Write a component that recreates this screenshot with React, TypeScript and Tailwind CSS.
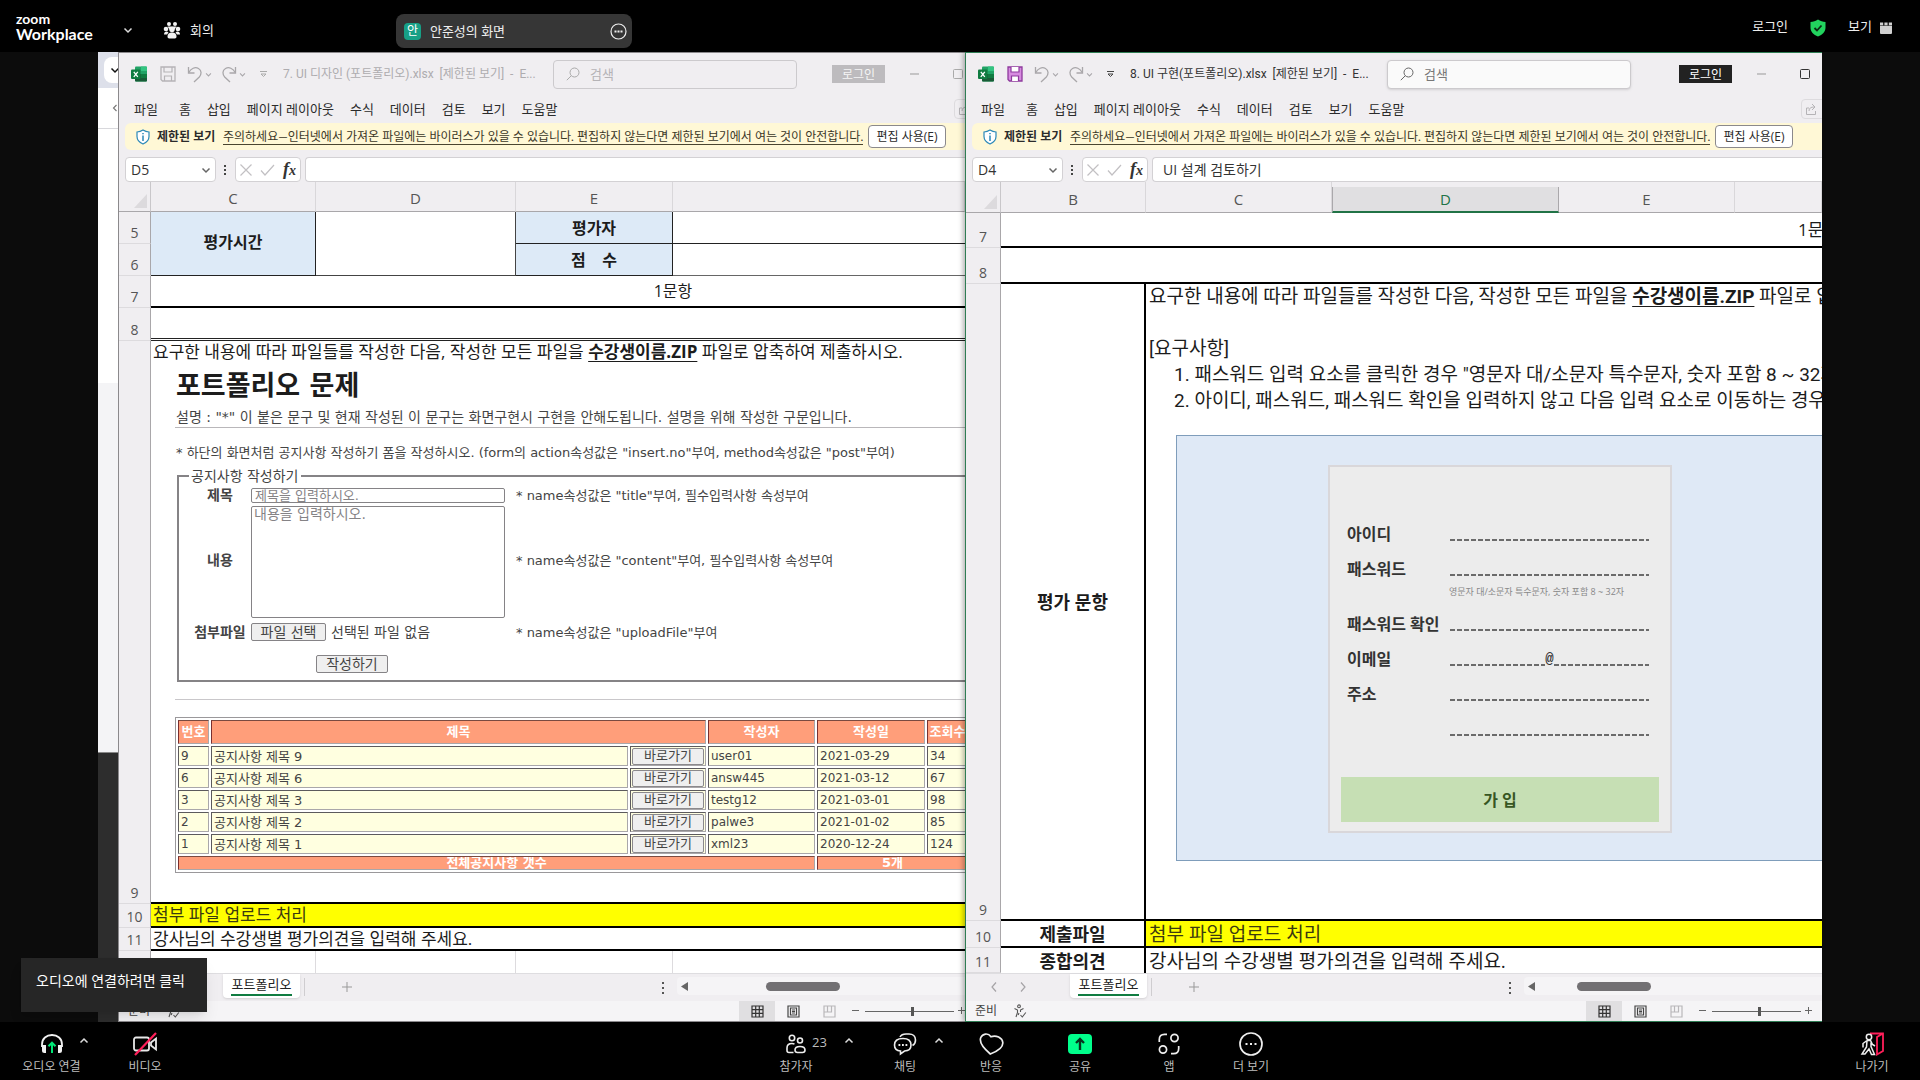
import React from "react";

type SheetWindowProps = {
  active: boolean;
  title: string;
  titleWidth: string;
  cellName: string;
  formula: string;
  thumbOffset: string;
  children: React.ReactNode;
};

const MENU = ["홈", "삽입", "페이지 레이아웃", "수식", "데이터", "검토", "보기", "도움말"];

function ExcelIcon() {
  return (
    <svg width="16" height="16" viewBox="0 0 16 16" className="shrink-0">
      <rect x="4" y="0.5" width="12" height="15" rx="1" fill="#21a366" />
      <path d="M10 .5h5a1 1 0 0 1 1 1V5h-6z" fill="#33c481" />
      <path d="M4 8h12v6.500a1 1 0 0 1-1 1H5a1 1 0 0 1-1-1z" fill="#185c37" />
      <rect x="10" y="8" width="6" height="4" fill="#107c41" />
      <rect x="0" y="3.500" width="9.500" height="9.500" rx="1" fill="#107c41" />
      <path d="M2.800 5.800l4 5M6.800 5.800l-4 5" stroke="#fff" strokeWidth="1.300" />
    </svg>
  );
}

function SaveIcon({ active }: { active: boolean }) {
  const s = active ? "#8e3a9d" : "#b5b3b6";
  const f = active ? "#d78be0" : "none";
  return (
    <svg width="16" height="16" viewBox="0 0 16 16" className="shrink-0">
      <path d="M1 1h14v14H2.500L1 13.500z" fill={f} stroke={s} strokeWidth="1.300" />
      <path d="M4 1v5h8V1" fill={active ? "#fff" : "none"} stroke={s} strokeWidth="1.200" />
      <path d="M4.500 15v-5h7v5" fill={active ? "#fff" : "none"} stroke={s} strokeWidth="1.200" />
    </svg>
  );
}

function UndoIcon({ flip }: { flip?: boolean }) {
  return (
    <svg width="16" height="18" viewBox="0 0 16 18" className={flip ? "shrink-0 -scale-x-100" : "shrink-0"} fill="none" stroke="#a9a7aa" strokeWidth="1.300">
      <path d="M1.500 2v6h6" />
      <path d="M1.800 7.500C4 3.500 8 1.500 11.500 3.500c3.500 2 3 6 .8 8.500L7 17" />
    </svg>
  );
}

function Chevron({ size, color, up }: { size: number; color: string; up?: boolean }) {
  return (
    <svg width={size} height={size} viewBox="0 0 10 10" fill="none" stroke={color} strokeWidth="1.500" className="shrink-0">
      {up ? <path d="M1.500 6.500L5 3l3.500 3.500" /> : <path d="M1.500 3.500L5 7l3.500-3.500" />}
    </svg>
  );
}

function InfoShield() {
  return (
    <svg width="14" height="16" viewBox="0 0 14 16" fill="none" className="shrink-0">
      <path d="M7 1c2 1.300 4 1.900 6 2v4.500c0 3.500-2.500 6-6 7.500-3.500-1.500-6-4-6-7.500V3c2-.1 4-.7 6-2z" stroke="#2b88b8" strokeWidth="1.200" fill="#fff" />
      <path d="M7 6.500V12M7 4v1.300" stroke="#2b88b8" strokeWidth="1.500" />
    </svg>
  );
}

function StatusBar() {
  return (
    <div className="flex h-5 shrink-0 items-center bg-[#f5f4f6] pl-[9px] text-[12px] leading-[18px] text-[#444]">
      <span className="w-[38px] shrink-0">준비</span>
      <svg width="14" height="14" viewBox="0 0 14 14" fill="none" stroke="#555" strokeWidth="1.100" className="shrink-0">
        <circle cx="6" cy="2.300" r="1.400" />
        <path d="M1.500 4.500L4.500 6v2.500L3 13M10.500 4.500L7.500 6v2M6 9l-.8 2M7.500 11l1.800 2 3.500-4.500" />
      </svg>
      <div className="w-[559px] shrink-0" />
      <button aria-label="기본" className="flex h-5 w-9 shrink-0 items-center justify-center bg-[#e0dfe1]">
        <svg width="13" height="13" viewBox="0 0 13 13" fill="none" stroke="#333" strokeWidth="1.200">
          <path d="M1 1h11v11H1zM4.700 1v11M8.300 1v11M1 4.700h11M1 8.300h11" />
        </svg>
      </button>
      <button aria-label="페이지 레이아웃" className="flex h-5 w-9 shrink-0 items-center justify-center">
        <svg width="13" height="13" viewBox="0 0 13 13" fill="none" stroke="#444" strokeWidth="1.200">
          <path d="M1 1h11v11H1zM3.500 3h6v7h-6zM5 5h3M5 6.500h3M5 8h3" />
        </svg>
      </button>
      <button aria-label="페이지 나누기 미리 보기" className="flex h-5 w-9 shrink-0 items-center justify-center">
        <svg width="13" height="13" viewBox="0 0 13 13" fill="none" stroke="#b9b7ba" strokeWidth="1.200">
          <path d="M1 1h11v11H1zM4.500 1v6M8.500 1v6H1" />
        </svg>
      </button>
      <svg width="118" height="12" viewBox="0 0 118 12" fill="none" stroke="#666" className="ml-[3px] shrink-0">
        <path d="M2 5.500h7M15 6.500h89M108 5.500h7M111.500 2v7" />
        <rect x="61" y="2" width="3" height="9" fill="#555" stroke="none" />
      </svg>
    </div>
  );
}

function SheetTabs({ thumbOffset }: { thumbOffset: string }) {
  return (
    <div className="flex h-7 shrink-0 items-start border-t border-[#dedde0] bg-[#f0eef1]">
      <div className="flex h-[26px] w-[104px] shrink-0 items-center pl-[24px]">
        <svg width="40" height="12" viewBox="0 0 40 12" fill="none" stroke="#a5a3a6" strokeWidth="1.200">
          <path d="M6 1.500L2 6l4 4.500M31 1.500L35 6l-4 4.500" />
        </svg>
      </div>
      <button className="flex h-6 w-[77px] shrink-0 justify-center rounded-b bg-white text-[13px] text-[#222] shadow-sm">
        <span className="h-[22px] border-b-2 border-[#107c41] px-px leading-5">포트폴리오</span>
      </button>
      <div className="mt-1 ml-1 h-[18px] w-px shrink-0 bg-[#cfcdd0]" />
      <svg width="12" height="12" viewBox="0 0 12 12" stroke="#999" className="mt-[7px] ml-9 shrink-0">
        <path d="M6 1v10M1 6h10" />
      </svg>
      <svg width="4" height="14" viewBox="0 0 4 14" fill="#555" className="mt-[7px] ml-[308px] shrink-0">
        <rect x="1" y="1" width="2" height="2" />
        <rect x="1" y="6" width="2" height="2" />
        <rect x="1" y="11" width="2" height="2" />
      </svg>
      <div className="mt-[3px] ml-3 flex h-[18px] min-w-0 flex-1 items-center overflow-hidden rounded-l bg-[#f5f4f6]">
        <svg width="7" height="9" viewBox="0 0 7 9" className="ml-1 shrink-0">
          <path d="M7 0v9L0 4.500z" fill="#666" />
        </svg>
        <div className={thumbOffset + " h-[9px] w-[74px] shrink-0 rounded-full bg-[#727073]"} />
      </div>
    </div>
  );
}

function SheetWindow({ active, title, titleWidth, cellName, formula, thumbOffset, children }: SheetWindowProps) {
  return (
    <section
      className={
        active
          ? "flex min-w-0 flex-[857] basis-0 flex-col overflow-hidden border-y border-l border-[#2f7d54] bg-[#f0eef1] shadow-[-2px_0_5px_rgba(0,0,0,0.3)]"
          : "flex min-w-0 flex-[847] basis-0 flex-col overflow-hidden border-y border-l border-[#8b898c] bg-[#f0eef1]"
      }
    >
      <div className="flex h-[42px] shrink-0 items-center pl-[12px]">
        <div className="flex w-[701px] shrink-0 items-center">
          <ExcelIcon />
          <div className="w-[13px] shrink-0" />
          <SaveIcon active={active} />
          <div className="w-[11px] shrink-0" />
          <UndoIcon />
          <div className="w-[2px] shrink-0" />
          <Chevron size={7} color="#a9a7aa" />
          <div className="w-[9px] shrink-0" />
          <UndoIcon flip />
          <div className="w-[2px] shrink-0" />
          <Chevron size={7} color="#a9a7aa" />
          <svg width="9" height="8" viewBox="0 0 9 8" fill="none" stroke={active ? "#444" : "#aaa"} className="ml-[13px] shrink-0">
            <path d="M1 1.500h7M2 4l2.500 2.500L7 4z" />
          </svg>
          <div className={active ? "pl-[15px] text-[#333]" : "pl-[15px] text-[#aeacaf]"}>
            <div className={titleWidth + " truncate whitespace-pre font-['Roboto','Noto_Sans_CJK_KR',sans-serif] text-[12px] leading-5"}>{title}</div>
          </div>
          <label
            className={
              active
                ? "flex h-[29px] w-[244px] shrink-0 items-center rounded border border-[#cccacd] bg-[#fafafa] pl-[12px] shadow-sm"
                : "flex h-[29px] w-[244px] shrink-0 items-center rounded border border-[#cccacd] pl-[12px]"
            }
          >
            <svg width="14" height="14" viewBox="0 0 14 14" fill="none" stroke={active ? "#666" : "#aaa"}>
              <circle cx="8.500" cy="5.500" r="4.500" />
              <path d="M5.300 8.700L.8 13.200" />
            </svg>
            <input
              aria-label="검색"
              placeholder="검색"
              className={
                active
                  ? "ml-[10px] w-40 bg-transparent text-[13px] leading-5 outline-none placeholder:text-[#777]"
                  : "ml-[10px] w-40 bg-transparent text-[13px] leading-5 outline-none placeholder:text-[#b5b3b6]"
              }
            />
          </label>
        </div>
        <button
          className={
            active
              ? "h-[18px] w-[53px] shrink-0 bg-[#222] text-[12px] leading-[17px] text-white"
              : "h-[18px] w-[53px] shrink-0 bg-[#bdbbbe] text-[12px] leading-[17px] text-[#f5f5f5]"
          }
        >
          로그인
        </button>
        <svg width="56" height="12" viewBox="0 0 56 12" fill="none" stroke={active ? "#333" : "#aaa"} className="ml-[24px] shrink-0">
          <path d="M1 6h9" stroke="#999" />
          <rect x="44.500" y="1.500" width="9" height="9" rx="1" />
        </svg>
      </div>

      <nav className="flex h-7 shrink-0 items-center pl-[15px] text-[13px] leading-5 whitespace-nowrap text-[#2b2b2b]">
        <button className="mr-[21px] shrink-0">파일</button>
        <div className="flex w-[645px] shrink-0 gap-[16px]">
          {MENU.map((m) => (
            <button key={m} className="shrink-0">
              {m}
            </button>
          ))}
        </div>
        <button aria-label="공유" className="ml-[130px] flex h-5 w-10 shrink-0 items-center rounded border border-[#dddbde] pl-1">
          <svg width="11" height="12" viewBox="0 0 11 12" fill="none" stroke="#b5b3b6">
            <path d="M3 5H.5v6.500h9V8M3 8c0-3 2-4 5-4M6 1l3 3-3 3" />
          </svg>
        </button>
      </nav>

      <div className="ml-[6px] flex h-[27px] shrink-0 items-center rounded-l-md bg-[#fff8d6] pl-[11px] text-[12px] leading-[18px] whitespace-nowrap text-[#2b2b2b]">
        <InfoShield />
        <b className="ml-[7px] w-[66px] shrink-0 font-bold">제한된 보기</b>
        <a href="#info" className="w-[635px] shrink-0 font-['Lato','Noto_Sans_CJK_KR',sans-serif] text-[#3a3626]">
          <span className="border-b border-[#4a452f]">주의하세요—인터넷에서 가져온 파일에는 바이러스가 있을 수 있습니다. 편집하지 않는다면 제한된 보기에서 여는 것이 안전합니다.</span>
        </a>
        <button className="ml-[10px] h-[23px] w-[78px] shrink-0 rounded border border-[#8b898c] bg-white text-[12px] leading-5">편집 사용(E)</button>
      </div>

      <div className="mt-[7px] ml-[6px] flex h-[25px] shrink-0 items-stretch text-[#333]">
        <div className="flex w-[91px] shrink-0 items-center justify-between rounded border border-[#d3d1d4] bg-white pr-1 pl-[5px] text-[14px] leading-5">
          {cellName}
          <Chevron size={10} color="#666" />
        </div>
        <svg width="4" height="12" viewBox="0 0 4 12" fill="#444" className="mt-[7px] ml-[7px] shrink-0">
          <rect x="1" y="1" width="2" height="2" />
          <rect x="1" y="5" width="2" height="2" />
          <rect x="1" y="9" width="2" height="2" />
        </svg>
        <div className="ml-2 flex w-[66px] shrink-0 items-center rounded border border-[#d3d1d4] bg-white pl-[3px]">
          <svg width="36" height="14" viewBox="0 0 36 14" fill="none" stroke="#c2c0c3" strokeWidth="1.200">
            <path d="M1.500 1.500l11 11M12.500 1.500l-11 11M22 7.500l4 4.500L35 2" />
          </svg>
          <i className="ml-2 font-['Liberation_Serif',serif] text-[18px] leading-5 font-bold">
            f<span className="text-[14px]">x</span>
          </i>
        </div>
        <input
          aria-label="수식 입력줄"
          defaultValue={formula}
          className="ml-1 min-w-0 flex-1 rounded-l border-y border-l border-[#d3d1d4] bg-white pl-[10px] text-[14px] leading-5 outline-none"
        />
      </div>

      {children}
      <SheetTabs thumbOffset={thumbOffset} />
      <StatusBar />
    </section>
  );
}

function Corner() {
  return (
    <div className="flex items-end justify-end border-r border-b border-[#a9a7aa] border-r-[#c9c7ca] p-[3px]">
      <svg width="13" height="14" viewBox="0 0 13 14">
        <path d="M13 0v14H0z" fill="#dcdadd" />
      </svg>
    </div>
  );
}

function ColHead({ name, selected }: { name?: string; selected?: boolean }) {
  return (
    <div
      className={
        selected
          ? "mt-[5px] flex items-center justify-center border-x border-b-2 border-x-[#aaa8ab] border-b-[#217346] bg-[#e0dfe1] text-[#217346]"
          : "flex items-center justify-center border-r border-b border-r-[#d9d7da] border-b-[#a9a7aa] pt-[3px] text-[#555]"
      }
    >
      {name}
    </div>
  );
}

function RowHead({ n }: { n: string }) {
  return <div className="flex items-end justify-center border-r border-b border-r-[#a9a7aa] border-b-[#dddbde] text-[14px] leading-5 text-[#555]">{n}</div>;
}

const POSTS = [
  ["9", "공지사항 제목 9", "user01", "2021-03-29", "34"],
  ["6", "공지사항 제목 6", "answ445", "2021-03-12", "67"],
  ["3", "공지사항 제목 3", "testg12", "2021-03-01", "98"],
  ["2", "공지사항 제목 2", "palwe3", "2021-01-02", "85"],
  ["1", "공지사항 제목 1", "xml23", "2020-12-24", "124"],
];

const TD = "border border-t-[#5c5a5d] border-l-[#5c5a5d] border-r-[#a9a7aa] border-b-[#a9a7aa] p-0 h-5 overflow-hidden";
const TH = "border border-t-[#7a4a40] border-l-[#7a2f2f] border-r-[#a9a7aa] border-b-[#a9a7aa] p-0 overflow-hidden text-center text-[13px] leading-[12px] font-bold text-white bg-[#ff9e7a]";

function PostTable() {
  return (
    <table className="w-[796px] table-fixed border-separate border-spacing-[2px] border border-[#9a989b] text-[12px] leading-[13px] text-[#444]">
      <colgroup>
        <col className="w-[31px]" />
        <col className="w-[417px]" />
        <col className="w-[76px]" />
        <col className="w-[107px]" />
        <col className="w-[108px]" />
        <col className="w-[41px]" />
      </colgroup>
      <thead>
        <tr>
          <th className={TH + " h-6"}>번호</th>
          <th className={TH} colSpan={2}>제목</th>
          <th className={TH}>작성자</th>
          <th className={TH}>작성일</th>
          <th className={TH}>조회수</th>
        </tr>
      </thead>
      <tbody>
        {POSTS.map((p) => (
          <tr key={p[0]} className="bg-[#ffffe0]">
            <td className={TD + " pl-[2px]"}>{p[0]}</td>
            <td className={TD + " pl-[2px] text-[13px]"}>{p[1]}</td>
            <td className={TD}>
              <button className="mx-auto block h-[17px] w-[72px] rounded-xs border border-[#8b898c] bg-[#efefef] text-[13px] leading-[14px]">바로가기</button>
            </td>
            <td className={TD + " pl-[2px]"}>{p[2]}</td>
            <td className={TD + " pl-[2px]"}>{p[3]}</td>
            <td className={TD + " pl-[2px]"}>{p[4]}</td>
          </tr>
        ))}
      </tbody>
      <tfoot>
        <tr>
          <th className={TH + " h-[14px]"} colSpan={4}>전체공지사항 갯수</th>
          <th className={TH} colSpan={2}>5개</th>
        </tr>
      </tfoot>
    </table>
  );
}

function PortfolioDoc() {
  return (
    <div className="w-[1044px] pl-[24px] font-['DejaVu_Sans','Noto_Sans_CJK_KR',sans-serif] text-[13px] text-[#444]">
      <h1 className="mt-[7px] pl-[1px] text-[27px] leading-[32px] font-bold text-[#1c1c1c]">포트폴리오 문제</h1>
      <p className="mt-[5px] pl-[1px] text-[14px] leading-5 whitespace-nowrap">설명 : "*" 이 붙은 문구 및 현재 작성된 이 문구는 화면구현시 구현을 안해도됩니다. 설명을 위해 작성한 구문입니다.</p>
      <hr className="border-[#b9b7ba]" />
      <p className="mt-[15px] pl-[1px] leading-5 whitespace-nowrap">* 하단의 화면처럼 공지사항 작성하기 폼을 작성하시오. (form의 action속성값은 "insert.no"부여, method속성값은 "post"부여)</p>
      <fieldset className="mt-[3px] ml-[2px] h-[216px] w-[1000px] border-2 border-[#858386] pl-[10px]">
        <legend className="px-[2px] text-[14px] leading-5">공지사항 작성하기</legend>
        <div className="mt-[2px] grid grid-cols-[62px_265px_1fr] items-center leading-[15px]">
          <label htmlFor="post-title" className="text-center text-[14px] font-bold">제목</label>
          <input id="post-title" placeholder="제목을 입력하시오." className="h-[15px] w-[254px] rounded-xs border border-[#858386] px-[3px] text-[13px] leading-[13px] outline-none placeholder:text-[#858386]" />
          <span>* name속성값은 "title"부여, 필수입력사항 속성부여</span>
          <label htmlFor="post-body" className="text-center text-[14px] font-bold">내용</label>
          <textarea id="post-body" placeholder="내용을 입력하시오." className="mt-[3px] block h-[112px] w-[254px] resize-none rounded-xs border border-[#858386] px-[2px] text-[14px] leading-[14px] outline-none placeholder:text-[#858386]" />
          <span>* name속성값은 "content"부여, 필수입력사항 속성부여</span>
          <span className="mt-[5px] text-center text-[14px] font-bold">첨부파일</span>
          <div className="mt-[5px] flex items-center gap-[5px] text-[14px]">
            <button className="h-[18px] w-[75px] rounded-xs border border-[#858386] bg-[#efefef]">파일 선택</button>
            선택된 파일 없음
          </div>
          <span className="mt-[5px]">* name속성값은 "uploadFile"부여</span>
        </div>
        <button className="mt-[14px] ml-[127px] block h-[18px] w-[72px] rounded-xs border border-[#858386] bg-[#efefef] text-[14px] leading-[15px]">작성하기</button>
      </fieldset>
      <hr className="mt-[17px] mb-[17px] border-[#c9c7ca]" />
      <PostTable />
    </div>
  );
}

function LeftSheet() {
  return (
    <div className="grid min-h-0 flex-1 grid-cols-[32px_165px_200px_157px_1fr] grid-rows-[30px_32px_32px_32px_33px_1fr_24px_23px_22px] overflow-hidden text-[17px] leading-6 whitespace-nowrap text-[#1c1c1c]">
      <Corner />
      <div className="col-span-4 grid grid-cols-subgrid text-[15px] leading-5">
        <ColHead name="C" />
        <ColHead name="D" />
        <ColHead name="E" />
        <ColHead />
      </div>

      <RowHead n="5" />
      <div className="row-span-2 flex items-center justify-center border-r border-b border-[#222] bg-[#ddeaf7] pb-1 text-[16px] font-bold">평가시간</div>
      <div className="row-span-2 border-r border-b border-[#444] bg-white" />
      <div className="flex items-center justify-center border-r border-b border-[#222] bg-[#ddeaf7] text-[16px] font-bold">평가자</div>
      <div className="border-b border-[#222] bg-white" />
      <RowHead n="6" />
      <div className="flex items-center justify-center border-r border-b border-[#222] bg-[#ddeaf7] text-[16px] font-bold whitespace-pre">점    수</div>
      <div className="border-b border-[#666] bg-white" />

      <RowHead n="7" />
      <div className="col-span-4 overflow-hidden border-b-2 border-black bg-white">
        <div className="w-[1044px] pt-[3px] text-center text-[16px]">1문항</div>
      </div>
      <RowHead n="8" />
      <div className="col-span-4 border-b-[3px] border-double border-[#222] bg-white" />
      <RowHead n="9" />
      <div className="col-span-4 overflow-hidden border-b-2 border-black bg-white">
        <p className="pl-[2px] leading-[22px]">
          요구한 내용에 따라 파일들를 작성한 다음, 작성한 모든 파일을 <b className="underline underline-offset-[3px]">수강생이름.ZIP</b> 파일로 압축하여 제출하시오.
        </p>
        <PortfolioDoc />
      </div>
      <RowHead n="10" />
      <div className="col-span-4 flex items-center border-b-2 border-black bg-[#ffff00] pl-[2px] text-[#3b3a10]">첨부 파일 업로드 처리</div>
      <RowHead n="11" />
      <div className="col-span-4 flex items-center border-b-2 border-black bg-white pl-[2px]">강사님의 수강생별 평가의견을 입력해 주세요.</div>
      <div className="border-r border-[#a9a7aa]" />
      <div className="border-r border-[#dddbde] bg-white" />
      <div className="border-r border-[#dddbde] bg-white" />
      <div className="border-r border-[#dddbde] bg-white" />
      <div className="bg-white" />
    </div>
  );
}

const DASH = "h-[14px] min-w-0 flex-1 bg-[repeating-linear-gradient(to_right,#6b6b6b_0_5px,transparent_5px_7px)] bg-[length:100%_2px] bg-bottom bg-no-repeat outline-none";

function Field({ id, label }: { id: string; label: string }) {
  return (
    <div className="flex h-[35px] items-center">
      <label htmlFor={id} className="w-[103px] shrink-0">{label}</label>
      <input id={id} className={DASH} />
    </div>
  );
}

function SignUpForm() {
  return (
    <div className="w-[344px] border-2 border-[#d9d7da] bg-[#ececec] px-[11px] pt-[49px] pb-[9px] text-[16px] leading-6 font-bold text-[#333]">
      <div className="pr-[10px] pl-[6px]">
        <Field id="uid" label="아이디" />
        <Field id="pw" label="패스워드" />
        <p className="-mt-[4px] h-[24px] pl-[102px] text-[9px] leading-5 font-normal text-[#888]">영문자 대/소문자 특수문자, 숫자 포함 8 ~ 32자</p>
        <Field id="pw2" label="패스워드 확인" />
        <div className="flex h-[35px] items-center">
          <label htmlFor="mail" className="w-[103px] shrink-0">이메일</label>
          <input id="mail" className={DASH} />
          <span className="font-['Liberation_Mono',monospace] text-[14px] leading-5">@</span>
          <input aria-label="이메일 도메인" className={DASH} />
        </div>
        <Field id="addr" label="주소" />
        <Field id="addr2" label="" />
      </div>
      <button className="mt-[31px] h-[45px] w-full bg-[#c6dfb4] text-[#375623]">가 입</button>
    </div>
  );
}

function RightSheet() {
  return (
    <div className="grid min-h-0 flex-1 grid-cols-[35px_145px_186px_227px_176px_1fr] grid-rows-[31px_35px_36px_1fr_27px_25px] overflow-hidden text-[19px] leading-[26px] whitespace-nowrap text-[#1c1c1c]">
      <Corner />
      <div className="col-span-5 grid grid-cols-subgrid text-[15px] leading-6">
        <ColHead name="B" />
        <ColHead name="C" />
        <ColHead name="D" selected />
        <ColHead name="E" />
        <ColHead />
      </div>

      <RowHead n="7" />
      <div className="col-span-5 overflow-hidden border-b-2 border-black bg-white pt-[4px] pl-[797px] text-[17px]">1문항</div>
      <RowHead n="8" />
      <div className="col-span-5 border-b-2 border-black bg-white" />
      <RowHead n="9" />
      <div className="flex items-center justify-center border-r-2 border-b-2 border-black bg-white text-[18px] font-bold">평가 문항</div>
      <div className="col-span-4 overflow-hidden border-b-2 border-black bg-white pl-[3px]">
        <div className="font-['Roboto','Noto_Sans_CJK_KR',sans-serif]">
          <p>
            요구한 내용에 따라 파일들를 작성한 다음, 작성한 모든 파일을 <b className="underline underline-offset-[3px]">수강생이름.ZIP</b> 파일로 압축하여 제출하시오.
          </p>
          <p className="mt-[26px]">[요구사항]</p>
          <ol className="pl-[25px]">
            <li>1. 패스워드 입력 요소를 클릭한 경우 "영문자 대/소문자 특수문자, 숫자 포함 8 ~ 32자"</li>
            <li>2. 아이디, 패스워드, 패스워드 확인을 입력하지 않고 다음 입력 요소로 이동하는 경우</li>
          </ol>
        </div>
        <div className="mt-[21px] ml-[27px] w-[900px] border border-[#7f9dbb] bg-[#dfe9f6] pt-[29px] pb-[27px] pl-[151px]">
          <SignUpForm />
        </div>
      </div>
      <RowHead n="10" />
      <div className="flex items-center justify-center border-r-2 border-b-2 border-black bg-white text-[18px] font-bold">제출파일</div>
      <div className="col-span-4 flex items-center border-b-2 border-black bg-[#ffff00] pl-[3px] text-[#3b3a10]">첨부 파일 업로드 처리</div>
      <RowHead n="11" />
      <div className="flex items-center justify-center border-r-2 border-black bg-white text-[18px] font-bold">종합의견</div>
      <div className="col-span-4 flex items-center bg-white pl-[3px]">강사님의 수강생별 평가의견을 입력해 주세요.</div>
    </div>
  );
}

function TopBar() {
  return (
    <header className="flex h-[52px] shrink-0 items-center bg-black pl-4 text-[13px] leading-5 text-[#eee]">
      <div className="w-[107px] pt-px font-['Lato',sans-serif] text-white">
        <div className="text-[14px] leading-[14px] font-bold">zoom</div>
        <div className="text-[16px] leading-[15px] font-bold">Workplace</div>
      </div>
      <button aria-label="메뉴" className="mt-2">
        <Chevron size={10} color="#ddd" />
      </button>
      <button className="mt-2 ml-[30px] flex items-center gap-[9px]">
        <svg width="18" height="18" viewBox="0 0 18 18" fill="#f2f2f2">
          <circle cx="6" cy="3" r="2" />
          <circle cx="12" cy="3" r="2" />
          <circle cx="3" cy="8" r="2.300" />
          <circle cx="15" cy="8" r="2.300" />
          <circle cx="9" cy="8.500" r="2.700" />
          <path d="M4.500 5.500h9l-2 3h-5zM1 13.500c0-2 1-3 3-3l1.500 1-1.500 2zM17 13.500c0-2-1-3-3-3l-1.500 1 1.500 2z" />
          <path d="M4.500 15.500c0-2.500 1.500-4 4.500-4s4.500 1.500 4.500 4c0 1.300-.6 2-1.800 2H6.300c-1.200 0-1.800-.7-1.800-2z" />
        </svg>
        회의
      </button>
      <div className="mt-[10px] ml-[182px] flex h-[34px] w-[236px] items-center rounded-[8px] bg-[#363636] pr-[5px] pl-2">
        <span className="flex h-[17px] w-[17px] items-center justify-center rounded bg-[#17a086] text-[12px] text-white">안</span>
        <span className="ml-[9px]">안준성의 화면</span>
        <button aria-label="더 보기" className="ml-auto">
          <svg width="17" height="17" viewBox="0 0 17 17" fill="none" stroke="#eee">
            <circle cx="8.500" cy="8.500" r="7.500" strokeWidth="1.200" />
            <path d="M4.500 8.500h2M7.500 8.500h2M10.500 8.500h2" strokeWidth="1.800" />
          </svg>
        </button>
      </div>
      <div className="mr-[28px] ml-auto flex items-center">
        <button>로그인</button>
        <svg width="16" height="18" viewBox="0 0 16 18" className="mt-1 ml-[22px]">
          <path d="M8 .5c2.300 1.600 4.800 2.400 7.500 2.500v5.500c0 4.300-3 7.300-7.500 9-4.500-1.700-7.500-4.700-7.500-9V3C3.200 2.900 5.700 2.100 8 .5z" fill="#22d35e" />
          <path d="M4.500 9l2.500 2.500 4.500-5" fill="none" stroke="#0b2a14" strokeWidth="1.800" />
        </svg>
        <button className="ml-[22px] flex items-center gap-2">
          보기
          <svg width="12" height="12" viewBox="0 0 12 12" fill="#d0d0d0" className="mt-[3px]">
            <path d="M0 3.800h12V11a1 1 0 0 1-1 1H1a1 1 0 0 1-1-1zM0 .5h3.200v2.800H0zM4.400.5h3.200v2.800H4.400zM8.800.5H12v2.800H8.800z" />
          </svg>
        </button>
      </div>
    </header>
  );
}

function Tool({ label, width, children }: { label: string; width: string; children: React.ReactNode }) {
  return (
    <button className={width + " flex shrink-0 flex-col items-center text-[12px] leading-[18px] text-[#bdbdbd]"}>
      <span className="flex h-6 items-center justify-center">{children}</span>
      <span className="mt-[2px] whitespace-nowrap">{label}</span>
    </button>
  );
}

function BottomBar() {
  return (
    <footer className="flex h-[58px] shrink-0 items-start bg-black pt-[10px]">
      <div className="relative flex shrink-0">
        <div className="absolute bottom-full left-[21px] mb-[20px] h-[54px] w-[186px] bg-[#262626] pt-3 pl-[15px] text-[14px] leading-[22px] whitespace-nowrap text-white shadow-lg">오디오에 연결하려면 클릭</div>
        <div className="w-3" />
        <Tool label="오디오 연결" width="w-[79px]">
          <svg width="26" height="24" viewBox="0 0 26 24" fill="none">
            <path d="M3 15v-2.500C3 6.500 7.500 3 13 3s10 3.500 10 9.500V15" stroke="#f2f2f2" strokeWidth="1.800" />
            <path d="M3 13h4v8H5.500A2.500 2.500 0 0 1 3 18.500zM23 13h-4v8h1.500a2.500 2.500 0 0 0 2.500-2.500z" fill="#f2f2f2" />
            <path d="M13 21V11M9.500 14.200L13 10.700l3.500 3.500" stroke="#00e676" strokeWidth="2" />
          </svg>
        </Tool>
        <div className="-ml-[12px] pt-1">
          <Chevron size={10} color="#ddd" up />
        </div>
      </div>
      <div className="ml-[26px] shrink-0">
        <Tool label="비디오" width="w-[60px]">
          <svg width="26" height="24" viewBox="0 0 26 24" fill="none" stroke="#e8e8e8" strokeWidth="1.800">
            <rect x="2" y="5.500" width="15" height="13" rx="2" />
            <path d="M19 10.500l5-4v11l-5-4z" />
            <path d="M3 23L24 1" stroke="#ff1f5a" strokeWidth="2.200" />
          </svg>
        </Tool>
      </div>
      <div className="ml-auto w-[591px] shrink-0" />
      <div className="flex flex-1 shrink-0">
        <div className="relative">
          <Tool label="참가자" width="w-[60px]">
            <svg width="20" height="20" viewBox="0 0 20 20" fill="none" stroke="#eee" strokeWidth="1.600">
              <circle cx="6" cy="4" r="2.700" />
              <circle cx="14" cy="6.500" r="2.500" />
              <path d="M7.500 18.500H3c-1.300 0-2-.7-2-2V14c0-2.500 1.800-4.500 5-4.500 1 0 1.800.2 2.500.6M9 16c0-2 2-3.500 5-3.500s5 1.500 5 3.500c0 1.700-1 2.500-2.500 2.500h-5C10 18.500 9 17.700 9 16z" />
            </svg>
          </Tool>
          <span className="absolute top-0 left-[46px] text-[13px] leading-5 text-[#bdbdbd]">23</span>
        </div>
        <div className="ml-[18px] pt-1">
          <Chevron size={10} color="#ddd" up />
        </div>
        <div className="ml-[21px]">
          <Tool label="채팅" width="w-[60px]">
            <svg width="24" height="24" viewBox="0 0 24 24" fill="none" stroke="#eee" strokeWidth="1.600">
              <path d="M7 5c1-2 3-3 6-3h3c4 0 6.500 2.500 6.500 6 0 2.500-1 4.500-3 5.500" />
              <path d="M10 6.500c5 0 8 2 8 6.500 0 4-2.500 6-6.500 6l-4 3v-3c-4-.3-6-2.500-6-6 0-4.500 3-6.500 8.500-6.500z" />
              <path d="M5.500 13h1.800M9 13h1.800M12.500 13h1.800" strokeWidth="2" />
            </svg>
          </Tool>
        </div>
        <div className="-ml-[1px] pt-1">
          <Chevron size={10} color="#ddd" up />
        </div>
        <div className="ml-[17px]">
          <Tool label="반응" width="w-[60px]">
            <svg width="25" height="24" viewBox="0 0 25 24" fill="none" stroke="#eee" strokeWidth="1.700">
              <path d="M12 4.800C9 .5 3.500 1.500 1.800 5.500c-2 5 3 11 9.500 16.500 7-2.500 13-6 12.500-11.500C23.300 6 17 2.500 12 4.800z" />
            </svg>
          </Tool>
        </div>
        <div className="ml-[29px]">
          <Tool label="공유" width="w-[60px]">
            <svg width="24" height="20" viewBox="0 0 24 20">
              <rect width="24" height="20" rx="4" fill="#00ff8c" />
              <path d="M12 16V5M8 9l4-4 4 4" fill="none" stroke="#08321e" strokeWidth="2.400" />
            </svg>
          </Tool>
        </div>
        <div className="ml-[29px]">
          <Tool label="앱" width="w-[60px]">
            <svg width="22" height="22" viewBox="0 0 22 22" fill="none" stroke="#eee" strokeWidth="1.700">
              <circle cx="16.500" cy="5" r="3.600" />
              <circle cx="5" cy="16.500" r="3.600" />
              <path d="M1.300 9V6.500C1.300 3 3 1.300 6.500 1.300H9M20.700 13v2.500c0 3.500-1.700 5.200-5.200 5.200H13" />
            </svg>
          </Tool>
        </div>
        <div className="ml-[22px]">
          <Tool label="더 보기" width="w-[60px]">
            <svg width="24" height="24" viewBox="0 0 24 24" fill="none" stroke="#eee" strokeWidth="1.700">
              <circle cx="12" cy="12" r="11" />
              <path d="M6.500 12h2M11 12h2M15.500 12h2" strokeWidth="2.200" />
            </svg>
          </Tool>
        </div>
      </div>
      <div className="mr-[18px] shrink-0">
        <Tool label="나가기" width="w-[60px]">
          <svg width="24" height="24" viewBox="0 0 24 24" fill="none">
            <path d="M10 1.500h13V19l-6 3.500V5l6-3.500" stroke="#ff1f5a" strokeWidth="1.800" />
            <circle cx="9" cy="5" r="2.700" stroke="#eee" strokeWidth="1.500" />
            <path d="M7 8.500h3.500l2 4 2.500 1.500M7 8.500L3 11.500v4M7 8.500L6.500 15 2 22h3l4-5 2.500 5.500h3L11 14.500v-4" stroke="#eee" strokeWidth="1.500" />
          </svg>
        </Tool>
      </div>
    </footer>
  );
}

export default function App() {
  return (
    <div className="flex min-h-screen flex-col overflow-hidden bg-[#0c0c0c] font-['Open_Sans','Noto_Sans_CJK_KR',sans-serif]">
      <TopBar />
      <main className="flex flex-1 px-[98px]">
        <div className="flex w-5 shrink-0 flex-col overflow-hidden bg-white">
          <div className="flex h-9 items-center bg-[#dde0ea] pl-[6px]">
            <div className="flex h-[26px] w-8 shrink-0 items-center rounded-[8px] bg-white pl-[6px]">
              <Chevron size={10} color="#111" />
            </div>
          </div>
          <div className="flex h-[41px] items-center border-b border-[#d8d8dc] pl-[14px]">
            <svg width="8" height="10" viewBox="0 0 8 10" fill="none" stroke="#777" strokeWidth="1.500">
              <path d="M6 1L2 5l4 4" />
            </svg>
          </div>
          <div className="h-[254px]" />
          <div className="h-[370px] border-b border-[#888] bg-[#f4f4f6]" />
          <div className="flex-1 bg-[#2d2d2d]" />
        </div>
        <SheetWindow active={false} title={"7. UI 디자인 (포트폴리오).xlsx  [제한된 보기]  -  E..."} titleWidth="w-[270px]" cellName="D5" formula="" thumbOffset="ml-[78px]">
          <LeftSheet />
        </SheetWindow>
        <SheetWindow active title={"8. UI 구현(포트폴리오).xlsx  [제한된 보기]  -  E..."} titleWidth="w-[257px]" cellName="D4" formula="UI 설계 검토하기" thumbOffset="ml-[42px]">
          <RightSheet />
        </SheetWindow>
      </main>
      <BottomBar />
    </div>
  );
}
